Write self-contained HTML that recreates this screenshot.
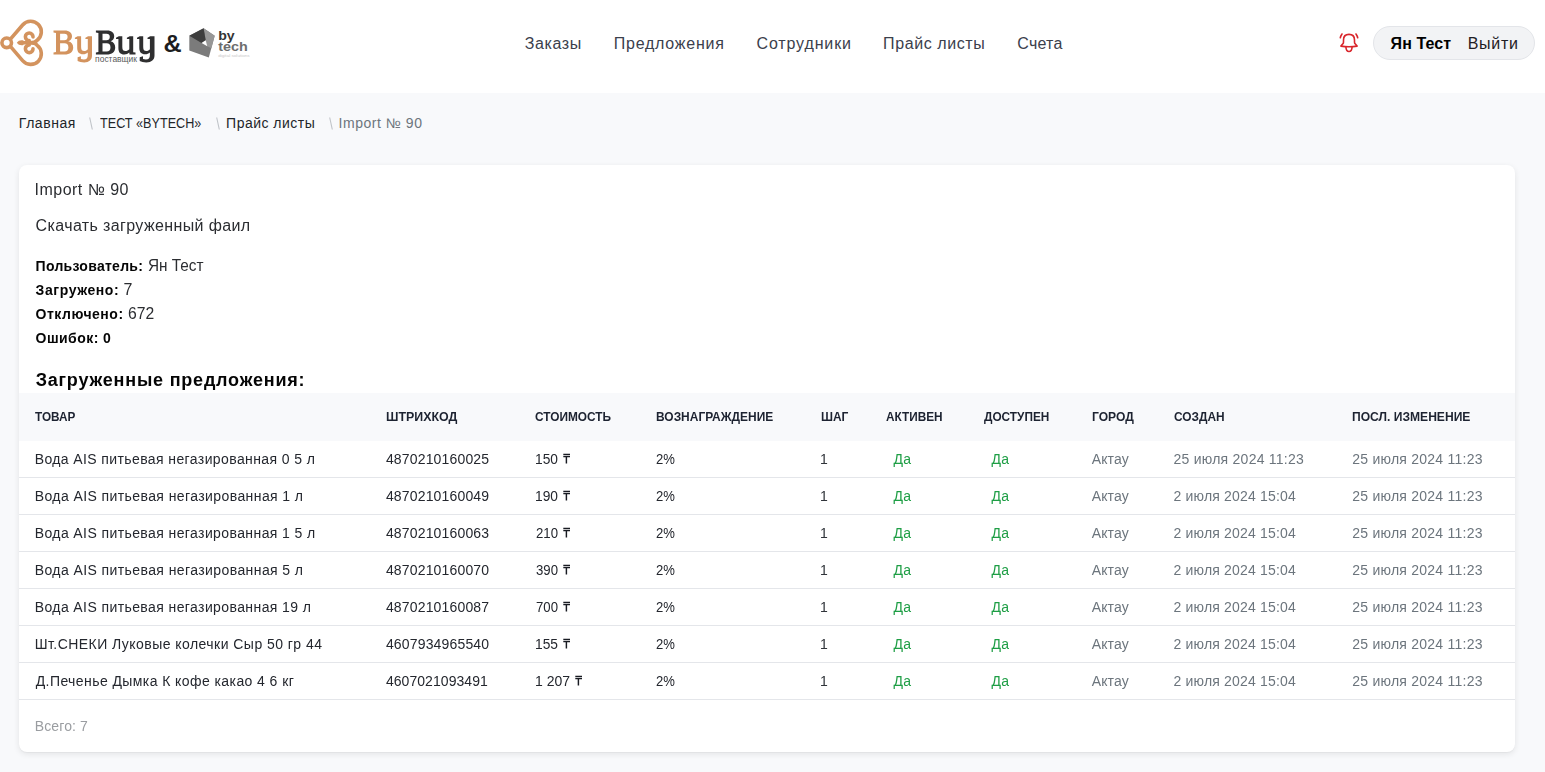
<!DOCTYPE html>
<html lang="ru"><head><meta charset="utf-8"><title>Import № 90</title>
<style>
html,body{margin:0;padding:0}
body{width:1545px;height:772px;overflow:hidden;position:relative;background:#f8f9fb;font-family:"Liberation Sans",sans-serif}
.t{position:absolute;white-space:nowrap}
.tg{display:inline-block;vertical-align:baseline}
header{position:absolute;left:0;top:0;width:1545px;height:93px;background:#fff}
.pill{position:absolute;left:1373px;top:26px;width:160px;height:32px;border:1px solid #e3e5e9;background:#f2f3f5;border-radius:17px}
.sep{position:absolute;top:117px;width:4px;height:13px}
.card{position:absolute;left:19px;top:165px;width:1496px;height:587px;background:#fff;border-radius:8px;box-shadow:0 2px 6px rgba(0,0,0,.09),0 1px 1px rgba(0,0,0,.03)}
.th{position:absolute;left:0;top:228px;width:1496px;height:48px;background:#f8f9fb}
.ct{position:absolute;left:0;top:0;width:1545px;height:772px;will-change:transform}
.rl{position:absolute;left:0;width:1496px;height:1px;background:#e4e6ea}
</style></head><body>
<header>
<svg style="position:absolute;left:0;top:0" width="260" height="93" viewBox="0 0 260 93">
<g fill="none" stroke="#d3935e" stroke-width="3.6" stroke-linecap="round" stroke-linejoin="round">
<circle cx="6.7" cy="42.8" r="4.8"/>
<path d="M10.4 39.2 L22.6 25.0 A10.6 10.6 0 1 1 37.2 40.2 Q35.2 42.8 30 42.8 L22 42.8"/>
<path d="M10.4 46.4 L22.6 60.6 A10.6 10.6 0 1 0 37.2 45.4 Q35.2 42.8 30 42.8"/>
<path d="M29.2 40.6 A3.8 3.8 0 1 1 33.0 36.9"/>
<path d="M29.2 45.0 A3.8 3.8 0 1 0 33.0 48.7"/>
</g>
<g fill="#d3935e">
<path d="M16.8 42.8 C18.3 40.6 20.6 39.9 23.5 40.5 L23.5 45.1 C20.6 45.7 18.3 45 16.8 42.8 Z"/>
<path fill-rule="evenodd" d="M53.5 30.5 H64.5 C69.5 30.5 72 33 72 36.3 C72 39 70.5 40.6 68.3 41.3 C71.5 42 73.2 44.3 73.2 47.5 C73.2 52 70 54.6 64.5 54.6 H53.5 V52.6 L56 52 V33.1 L53.5 32.5 Z M60.1 33.8 H64.3 C66.5 33.8 67.6 35 67.6 37 C67.6 39 66.4 40.3 64.2 40.3 H60.1 Z M60.1 43.3 H64.5 C67 43.3 68.4 44.8 68.4 47.4 C68.4 50 67 51.5 64.5 51.5 H60.1 Z"/>
<path d="M74.9 37.7 L77.6 36.3 H81.1 V47 C81.1 50 82.3 51 84.2 51 C85.6 51 87 50.2 87.8 49.2 V39 L85.4 38.9 V37.7 L88.1 36.3 H92 V55.5 C92 59.8 89.2 62.4 84.2 62.4 C81.5 62.4 79.2 61.8 77.6 61 V57.2 L80.9 56.2 V59 C81.8 59.3 82.8 59.5 83.8 59.5 C86.5 59.5 87.8 58 87.8 55 V52.5 C86.5 53.6 85 54.3 83 54.3 C79.2 54.3 77.2 52.2 77.2 47.8 V39 L74.9 38.9 Z"/>
</g>
<g fill="#2f2f30">
<path fill-rule="evenodd" d="M95.9 30.5 H107 C112 30.5 114.2 33 114.2 36.3 C114.2 39 112.8 40.6 110.6 41.3 C113.6 42 115.2 44.3 115.2 47.5 C115.2 52 112 54.6 106.6 54.6 H95.9 V52.6 L98.4 52 V33.1 L95.9 32.5 Z M102.5 33.8 H106.5 C108.7 33.8 109.8 35 109.8 37 C109.8 39 108.6 40.3 106.4 40.3 H102.5 Z M102.5 43.3 H106.6 C109.1 43.3 110.5 44.8 110.5 47.4 C110.5 50 109.1 51.5 106.6 51.5 H102.5 Z"/>
<path d="M116 37.7 L118.8 36.3 H122.3 V47 C122.3 50 123.5 51 125.4 51 C126.9 51 128.3 50.2 129.3 49.2 V39 L126.9 38.9 V37.7 L129.7 36.3 H133.2 V52.3 L135.5 52.6 V54.4 H129.5 L129.3 52.6 C128 53.8 126.4 54.5 124.3 54.5 C120.4 54.5 118.4 52.4 118.4 48 V39 L116 38.9 Z"/>
<path d="M137 37.7 L139.7 36.3 H143.2 V47 C143.2 50 144.4 51 146.3 51 C147.7 51 149.1 50.2 149.9 49.2 V39 L147.5 38.9 V37.7 L150.2 36.3 H154.5 V55.5 C154.5 59.8 151.5 62.4 146.3 62.4 C143.6 62.4 141.3 61.8 139.7 61 V57.2 L143 56.2 V59 C143.9 59.3 144.9 59.5 145.9 59.5 C148.6 59.5 149.9 58 149.9 55 V52.5 C148.6 53.6 147.1 54.3 145.1 54.3 C141.3 54.3 139.3 52.2 139.3 47.8 V39 L137 38.9 Z"/>
</g>
<text x="95.1" y="62" font-family="Liberation Sans" font-size="9" fill="#5c5c5c" textLength="41.9" lengthAdjust="spacingAndGlyphs">поставщик</text>
<text x="163.4" y="51.7" font-family="Liberation Sans" font-weight="700" font-size="24.5" fill="#1d1d1f" textLength="18.2" lengthAdjust="spacingAndGlyphs">&amp;</text>
<polygon points="189.3,35.7 203.6,28.2 214.7,35.7 208.8,57.4 189.3,50.6" fill="#7b7b7b"/>
<polygon points="203.6,28.2 214.7,35.7 211.4,48.3 207.3,46.2 205.7,40.3" fill="#979797"/>
<polygon points="189.3,35.7 203.6,28.2 205.7,40.3 201.6,43.1" fill="#3d3d3d"/>
<polygon points="201.6,43.1 205.7,40.3 207.3,46.2" fill="#ffffff"/>
<text x="218.2" y="40" font-family="Liberation Sans" font-weight="700" font-size="12.6" fill="#343434" textLength="16.5" lengthAdjust="spacingAndGlyphs">by</text>
<text x="218.2" y="50.9" font-family="Liberation Sans" font-weight="700" font-size="12" fill="#6d6d6d" textLength="29.5" lengthAdjust="spacingAndGlyphs">tech</text>
<text x="218.2" y="57.4" font-family="Liberation Sans" font-size="4" fill="#c9c9c9" textLength="31.5" lengthAdjust="spacingAndGlyphs">digital solutions</text>
</svg>

<svg style="position:absolute;left:1336px;top:30px" width="26" height="26" viewBox="1336 30 26 26" fill="none" stroke="#d9262c" stroke-width="1.6" stroke-linecap="round" stroke-linejoin="round">
<path d="M1343.3 43.2 C1343.6 42 1343.5 40.8 1343.5 39.9 C1343.5 36.4 1345.9 34.4 1349 34.4 C1352.1 34.4 1354.5 36.4 1354.5 39.9 C1354.5 40.8 1354.4 42 1354.7 43.2 L1357.1 46.1 C1351.8 46.9 1346.2 46.9 1340.9 46.1 Z"/>
<path d="M1345.9 46.7 C1346 49.5 1347.3 51.5 1349 51.5 C1350.7 51.5 1352 49.5 1352.1 46.7"/>
<path d="M1342 34 C1341.2 35.2 1340.6 36.5 1340.3 37.8"/>
<path d="M1356 34 C1356.8 35.2 1357.4 36.5 1357.7 37.8"/>
</svg>
<div class="pill"></div>
</header>
<svg class="sep" style="left:89px" viewBox="0 0 4 13"><path d="M0.7 0.5L3.3 12.5" stroke="#bfc3c8" stroke-width="1.1"/></svg>
<svg class="sep" style="left:216px" viewBox="0 0 4 13"><path d="M0.7 0.5L3.3 12.5" stroke="#bfc3c8" stroke-width="1.1"/></svg>
<svg class="sep" style="left:329px" viewBox="0 0 4 13"><path d="M0.7 0.5L3.3 12.5" stroke="#bfc3c8" stroke-width="1.1"/></svg>
<div class="card">
<div class="th"></div>
<div class="rl" style="top:312px"></div><div class="rl" style="top:349px"></div><div class="rl" style="top:386px"></div><div class="rl" style="top:423px"></div><div class="rl" style="top:460px"></div><div class="rl" style="top:497px"></div><div class="rl" style="top:534px"></div>
</div>
<span class="t" style="left:524.7px;top:36px;font:400 16px/16px 'Liberation Sans',sans-serif;color:#3b404c;letter-spacing:0.626px">Заказы</span>
<span class="t" style="left:613.7px;top:36px;font:400 16px/16px 'Liberation Sans',sans-serif;color:#3b404c;letter-spacing:0.771px">Предложения</span>
<span class="t" style="left:756.5px;top:36px;font:400 16px/16px 'Liberation Sans',sans-serif;color:#3b404c;letter-spacing:0.864px">Сотрудники</span>
<span class="t" style="left:883.1px;top:36px;font:400 16px/16px 'Liberation Sans',sans-serif;color:#3b404c;letter-spacing:0.592px">Прайс листы</span>
<span class="t" style="left:1017.3px;top:36px;font:400 16px/16px 'Liberation Sans',sans-serif;color:#3b404c;letter-spacing:0.218px">Счета</span>
<span class="t" style="left:1390.6px;top:36px;font:700 16px/16px 'Liberation Sans',sans-serif;color:#000;letter-spacing:0.071px">Ян Тест</span>
<span class="t" style="left:1467.7px;top:36px;font:400 16px/16px 'Liberation Sans',sans-serif;color:#1f2024;letter-spacing:0.716px">Выйти</span>
<span class="t" style="left:18.8px;top:116px;font:400 14px/14px 'Liberation Sans',sans-serif;color:#222529;letter-spacing:0.549px">Главная</span>
<span class="t" style="left:100.4px;top:116px;font:400 14px/14px 'Liberation Sans',sans-serif;color:#222529;transform-origin:0.00px 0;transform:scaleX(0.9018)">ТЕСТ «BYTECH»</span>
<span class="t" style="left:226.1px;top:116px;font:400 14px/14px 'Liberation Sans',sans-serif;color:#222529;letter-spacing:0.485px">Прайс листы</span>
<span class="t" style="left:338.6px;top:116px;font:400 14px/14px 'Liberation Sans',sans-serif;color:#6c757d;letter-spacing:0.534px">Import № 90</span>
<div class="ct">
<span class="t" style="left:34.6px;top:182px;font:400 16px/16px 'Liberation Sans',sans-serif;color:#2b2d31;letter-spacing:0.470px">Import № 90</span>
<span class="t" style="left:35.6px;top:218px;font:400 16px/16px 'Liberation Sans',sans-serif;color:#2b2d31;letter-spacing:0.375px">Скачать загруженный фаил</span>
<span class="t" style="left:35.6px;top:259px;font:700 14px/14px 'Liberation Sans',sans-serif;color:#050505;letter-spacing:0.277px">Пользователь:</span>
<span class="t" style="left:147.8px;top:258px;font:400 16px/16px 'Liberation Sans',sans-serif;color:#2b2d31;transform-origin:0.00px 0;transform:scaleX(0.9589)">Ян Тест</span>
<span class="t" style="left:35.6px;top:283px;font:700 14px/14px 'Liberation Sans',sans-serif;color:#050505;letter-spacing:0.573px">Загружено:</span>
<span class="t" style="left:123.4px;top:282px;font:400 16px/16px 'Liberation Sans',sans-serif;color:#2b2d31;letter-spacing:0.415px">7</span>
<span class="t" style="left:35.6px;top:307px;font:700 14px/14px 'Liberation Sans',sans-serif;color:#050505;letter-spacing:0.515px">Отключено:</span>
<span class="t" style="left:128.0px;top:306px;font:400 16px/16px 'Liberation Sans',sans-serif;color:#2b2d31;transform-origin:0.00px 0;transform:scaleX(0.9815)">672</span>
<span class="t" style="left:35.6px;top:331px;font:700 14px/14px 'Liberation Sans',sans-serif;color:#050505;letter-spacing:0.447px">Ошибок: 0</span>
<span class="t" style="left:35.7px;top:371px;font:700 18px/18px 'Liberation Sans',sans-serif;color:#050505;letter-spacing:0.793px">Загруженные предложения:</span>
<span class="t" style="left:35.1px;top:411px;font:700 12.5px/12.5px 'Liberation Sans',sans-serif;color:#1d2331;transform-origin:0.00px 0;transform:scaleX(0.9416)">ТОВАР</span>
<span class="t" style="left:385.9px;top:411px;font:700 12.5px/12.5px 'Liberation Sans',sans-serif;color:#1d2331;transform-origin:0.00px 0;transform:scaleX(0.9925)">ШТРИХКОД</span>
<span class="t" style="left:535.4px;top:411px;font:700 12.5px/12.5px 'Liberation Sans',sans-serif;color:#1d2331;transform-origin:0.00px 0;transform:scaleX(0.9485)">СТОИМОСТЬ</span>
<span class="t" style="left:655.5px;top:411px;font:700 12.5px/12.5px 'Liberation Sans',sans-serif;color:#1d2331;transform-origin:0.00px 0;transform:scaleX(0.9564)">ВОЗНАГРАЖДЕНИЕ</span>
<span class="t" style="left:820.6px;top:411px;font:700 12.5px/12.5px 'Liberation Sans',sans-serif;color:#1d2331;transform-origin:0.00px 0;transform:scaleX(0.9549)">ШАГ</span>
<span class="t" style="left:885.9px;top:411px;font:700 12.5px/12.5px 'Liberation Sans',sans-serif;color:#1d2331;transform-origin:0.00px 0;transform:scaleX(0.9441)">АКТИВЕН</span>
<span class="t" style="left:983.9px;top:411px;font:700 12.5px/12.5px 'Liberation Sans',sans-serif;color:#1d2331;transform-origin:0.00px 0;transform:scaleX(0.9453)">ДОСТУПЕН</span>
<span class="t" style="left:1092.1px;top:411px;font:700 12.5px/12.5px 'Liberation Sans',sans-serif;color:#1d2331;transform-origin:0.00px 0;transform:scaleX(0.9660)">ГОРОД</span>
<span class="t" style="left:1173.5px;top:411px;font:700 12.5px/12.5px 'Liberation Sans',sans-serif;color:#1d2331;transform-origin:0.00px 0;transform:scaleX(0.9511)">СОЗДАН</span>
<span class="t" style="left:1352.2px;top:411px;font:700 12.5px/12.5px 'Liberation Sans',sans-serif;color:#1d2331;transform-origin:0.00px 0;transform:scaleX(0.9674)">ПОСЛ. ИЗМЕНЕНИЕ</span>
<span class="t" style="left:34.7px;top:452px;font:400 14px/14px 'Liberation Sans',sans-serif;color:#24272e;letter-spacing:0.393px">Вода AIS питьевая негазированная 0 5 л</span>
<span class="t" style="left:385.9px;top:452px;font:400 14px/14px 'Liberation Sans',sans-serif;color:#24272e;letter-spacing:0.164px">4870210160025</span>
<span class="t" style="left:535.0px;top:452px;font:400 14px/14px 'Liberation Sans',sans-serif;color:#24272e;transform-origin:1.00px 0;transform:scaleX(0.9835)">150</span>
<span class="t" style="left:655.5px;top:452px;font:400 14px/14px 'Liberation Sans',sans-serif;color:#24272e;transform-origin:0.00px 0;transform:scaleX(0.9350)">2%</span>
<span class="t" style="left:820.0px;top:452px;font:400 14px/14px 'Liberation Sans',sans-serif;color:#30343a;letter-spacing:0.415px">1</span>
<span class="t" style="left:893.6px;top:452px;font:400 14px/14px 'Liberation Sans',sans-serif;color:#1e9e45;letter-spacing:0.119px">Да</span>
<span class="t" style="left:991.6px;top:452px;font:400 14px/14px 'Liberation Sans',sans-serif;color:#1e9e45;letter-spacing:0.119px">Да</span>
<span class="t" style="left:1091.7px;top:452px;font:400 14px/14px 'Liberation Sans',sans-serif;color:#6c757d;letter-spacing:0.124px">Актау</span>
<span class="t" style="left:1173.5px;top:452px;font:400 14px/14px 'Liberation Sans',sans-serif;color:#6c757d;letter-spacing:0.244px">25 июля 2024 11:23</span>
<span class="t" style="left:1352.2px;top:452px;font:400 14px/14px 'Liberation Sans',sans-serif;color:#6c757d;letter-spacing:0.244px">25 июля 2024 11:23</span>
<span class="t" style="left:34.7px;top:489px;font:400 14px/14px 'Liberation Sans',sans-serif;color:#24272e;letter-spacing:0.412px">Вода AIS питьевая негазированная 1 л</span>
<span class="t" style="left:385.9px;top:489px;font:400 14px/14px 'Liberation Sans',sans-serif;color:#24272e;letter-spacing:0.164px">4870210160049</span>
<span class="t" style="left:535.0px;top:489px;font:400 14px/14px 'Liberation Sans',sans-serif;color:#24272e;transform-origin:1.00px 0;transform:scaleX(0.9835)">190</span>
<span class="t" style="left:655.5px;top:489px;font:400 14px/14px 'Liberation Sans',sans-serif;color:#24272e;transform-origin:0.00px 0;transform:scaleX(0.9350)">2%</span>
<span class="t" style="left:820.0px;top:489px;font:400 14px/14px 'Liberation Sans',sans-serif;color:#30343a;letter-spacing:0.415px">1</span>
<span class="t" style="left:893.6px;top:489px;font:400 14px/14px 'Liberation Sans',sans-serif;color:#1e9e45;letter-spacing:0.119px">Да</span>
<span class="t" style="left:991.6px;top:489px;font:400 14px/14px 'Liberation Sans',sans-serif;color:#1e9e45;letter-spacing:0.119px">Да</span>
<span class="t" style="left:1091.7px;top:489px;font:400 14px/14px 'Liberation Sans',sans-serif;color:#6c757d;letter-spacing:0.124px">Актау</span>
<span class="t" style="left:1173.5px;top:489px;font:400 14px/14px 'Liberation Sans',sans-serif;color:#6c757d;letter-spacing:0.181px">2 июля 2024 15:04</span>
<span class="t" style="left:1352.2px;top:489px;font:400 14px/14px 'Liberation Sans',sans-serif;color:#6c757d;letter-spacing:0.244px">25 июля 2024 11:23</span>
<span class="t" style="left:34.7px;top:526px;font:400 14px/14px 'Liberation Sans',sans-serif;color:#24272e;letter-spacing:0.404px">Вода AIS питьевая негазированная 1 5 л</span>
<span class="t" style="left:385.9px;top:526px;font:400 14px/14px 'Liberation Sans',sans-serif;color:#24272e;letter-spacing:0.164px">4870210160063</span>
<span class="t" style="left:536.0px;top:526px;font:400 14px/14px 'Liberation Sans',sans-serif;color:#24272e;transform-origin:0.00px 0;transform:scaleX(0.9418)">210</span>
<span class="t" style="left:655.5px;top:526px;font:400 14px/14px 'Liberation Sans',sans-serif;color:#24272e;transform-origin:0.00px 0;transform:scaleX(0.9350)">2%</span>
<span class="t" style="left:820.0px;top:526px;font:400 14px/14px 'Liberation Sans',sans-serif;color:#30343a;letter-spacing:0.415px">1</span>
<span class="t" style="left:893.6px;top:526px;font:400 14px/14px 'Liberation Sans',sans-serif;color:#1e9e45;letter-spacing:0.119px">Да</span>
<span class="t" style="left:991.6px;top:526px;font:400 14px/14px 'Liberation Sans',sans-serif;color:#1e9e45;letter-spacing:0.119px">Да</span>
<span class="t" style="left:1091.7px;top:526px;font:400 14px/14px 'Liberation Sans',sans-serif;color:#6c757d;letter-spacing:0.124px">Актау</span>
<span class="t" style="left:1173.5px;top:526px;font:400 14px/14px 'Liberation Sans',sans-serif;color:#6c757d;letter-spacing:0.181px">2 июля 2024 15:04</span>
<span class="t" style="left:1352.2px;top:526px;font:400 14px/14px 'Liberation Sans',sans-serif;color:#6c757d;letter-spacing:0.244px">25 июля 2024 11:23</span>
<span class="t" style="left:34.7px;top:563px;font:400 14px/14px 'Liberation Sans',sans-serif;color:#24272e;letter-spacing:0.412px">Вода AIS питьевая негазированная 5 л</span>
<span class="t" style="left:385.9px;top:563px;font:400 14px/14px 'Liberation Sans',sans-serif;color:#24272e;letter-spacing:0.164px">4870210160070</span>
<span class="t" style="left:536.0px;top:563px;font:400 14px/14px 'Liberation Sans',sans-serif;color:#24272e;transform-origin:0.00px 0;transform:scaleX(0.9418)">390</span>
<span class="t" style="left:655.5px;top:563px;font:400 14px/14px 'Liberation Sans',sans-serif;color:#24272e;transform-origin:0.00px 0;transform:scaleX(0.9350)">2%</span>
<span class="t" style="left:820.0px;top:563px;font:400 14px/14px 'Liberation Sans',sans-serif;color:#30343a;letter-spacing:0.415px">1</span>
<span class="t" style="left:893.6px;top:563px;font:400 14px/14px 'Liberation Sans',sans-serif;color:#1e9e45;letter-spacing:0.119px">Да</span>
<span class="t" style="left:991.6px;top:563px;font:400 14px/14px 'Liberation Sans',sans-serif;color:#1e9e45;letter-spacing:0.119px">Да</span>
<span class="t" style="left:1091.7px;top:563px;font:400 14px/14px 'Liberation Sans',sans-serif;color:#6c757d;letter-spacing:0.124px">Актау</span>
<span class="t" style="left:1173.5px;top:563px;font:400 14px/14px 'Liberation Sans',sans-serif;color:#6c757d;letter-spacing:0.181px">2 июля 2024 15:04</span>
<span class="t" style="left:1352.2px;top:563px;font:400 14px/14px 'Liberation Sans',sans-serif;color:#6c757d;letter-spacing:0.244px">25 июля 2024 11:23</span>
<span class="t" style="left:34.7px;top:600px;font:400 14px/14px 'Liberation Sans',sans-serif;color:#24272e;letter-spacing:0.404px">Вода AIS питьевая негазированная 19 л</span>
<span class="t" style="left:385.9px;top:600px;font:400 14px/14px 'Liberation Sans',sans-serif;color:#24272e;letter-spacing:0.164px">4870210160087</span>
<span class="t" style="left:536.0px;top:600px;font:400 14px/14px 'Liberation Sans',sans-serif;color:#24272e;transform-origin:0.00px 0;transform:scaleX(0.9418)">700</span>
<span class="t" style="left:655.5px;top:600px;font:400 14px/14px 'Liberation Sans',sans-serif;color:#24272e;transform-origin:0.00px 0;transform:scaleX(0.9350)">2%</span>
<span class="t" style="left:820.0px;top:600px;font:400 14px/14px 'Liberation Sans',sans-serif;color:#30343a;letter-spacing:0.415px">1</span>
<span class="t" style="left:893.6px;top:600px;font:400 14px/14px 'Liberation Sans',sans-serif;color:#1e9e45;letter-spacing:0.119px">Да</span>
<span class="t" style="left:991.6px;top:600px;font:400 14px/14px 'Liberation Sans',sans-serif;color:#1e9e45;letter-spacing:0.119px">Да</span>
<span class="t" style="left:1091.7px;top:600px;font:400 14px/14px 'Liberation Sans',sans-serif;color:#6c757d;letter-spacing:0.124px">Актау</span>
<span class="t" style="left:1173.5px;top:600px;font:400 14px/14px 'Liberation Sans',sans-serif;color:#6c757d;letter-spacing:0.181px">2 июля 2024 15:04</span>
<span class="t" style="left:1352.2px;top:600px;font:400 14px/14px 'Liberation Sans',sans-serif;color:#6c757d;letter-spacing:0.244px">25 июля 2024 11:23</span>
<span class="t" style="left:34.7px;top:637px;font:400 14px/14px 'Liberation Sans',sans-serif;color:#24272e;letter-spacing:0.456px">Шт.СНЕКИ Луковые колечки Сыр 50 гр 44</span>
<span class="t" style="left:385.9px;top:637px;font:400 14px/14px 'Liberation Sans',sans-serif;color:#24272e;letter-spacing:0.164px">4607934965540</span>
<span class="t" style="left:535.0px;top:637px;font:400 14px/14px 'Liberation Sans',sans-serif;color:#24272e;transform-origin:1.00px 0;transform:scaleX(0.9835)">155</span>
<span class="t" style="left:655.5px;top:637px;font:400 14px/14px 'Liberation Sans',sans-serif;color:#24272e;transform-origin:0.00px 0;transform:scaleX(0.9350)">2%</span>
<span class="t" style="left:820.0px;top:637px;font:400 14px/14px 'Liberation Sans',sans-serif;color:#30343a;letter-spacing:0.415px">1</span>
<span class="t" style="left:893.6px;top:637px;font:400 14px/14px 'Liberation Sans',sans-serif;color:#1e9e45;letter-spacing:0.119px">Да</span>
<span class="t" style="left:991.6px;top:637px;font:400 14px/14px 'Liberation Sans',sans-serif;color:#1e9e45;letter-spacing:0.119px">Да</span>
<span class="t" style="left:1091.7px;top:637px;font:400 14px/14px 'Liberation Sans',sans-serif;color:#6c757d;letter-spacing:0.124px">Актау</span>
<span class="t" style="left:1173.5px;top:637px;font:400 14px/14px 'Liberation Sans',sans-serif;color:#6c757d;letter-spacing:0.181px">2 июля 2024 15:04</span>
<span class="t" style="left:1352.2px;top:637px;font:400 14px/14px 'Liberation Sans',sans-serif;color:#6c757d;letter-spacing:0.244px">25 июля 2024 11:23</span>
<span class="t" style="left:35.7px;top:674px;font:400 14px/14px 'Liberation Sans',sans-serif;color:#24272e;letter-spacing:0.420px">Д.Печенье Дымка К кофе какао 4 6 кг</span>
<span class="t" style="left:385.9px;top:674px;font:400 14px/14px 'Liberation Sans',sans-serif;color:#24272e;letter-spacing:0.056px">4607021093491</span>
<span class="t" style="left:535.0px;top:674px;font:400 14px/14px 'Liberation Sans',sans-serif;color:#24272e;transform-origin:1.00px 0;transform:scaleX(0.9986)">1 207</span>
<span class="t" style="left:655.5px;top:674px;font:400 14px/14px 'Liberation Sans',sans-serif;color:#24272e;transform-origin:0.00px 0;transform:scaleX(0.9350)">2%</span>
<span class="t" style="left:820.0px;top:674px;font:400 14px/14px 'Liberation Sans',sans-serif;color:#30343a;letter-spacing:0.415px">1</span>
<span class="t" style="left:893.6px;top:674px;font:400 14px/14px 'Liberation Sans',sans-serif;color:#1e9e45;letter-spacing:0.119px">Да</span>
<span class="t" style="left:991.6px;top:674px;font:400 14px/14px 'Liberation Sans',sans-serif;color:#1e9e45;letter-spacing:0.119px">Да</span>
<span class="t" style="left:1091.7px;top:674px;font:400 14px/14px 'Liberation Sans',sans-serif;color:#6c757d;letter-spacing:0.124px">Актау</span>
<span class="t" style="left:1173.5px;top:674px;font:400 14px/14px 'Liberation Sans',sans-serif;color:#6c757d;letter-spacing:0.181px">2 июля 2024 15:04</span>
<span class="t" style="left:1352.2px;top:674px;font:400 14px/14px 'Liberation Sans',sans-serif;color:#6c757d;letter-spacing:0.244px">25 июля 2024 11:23</span>
<span class="t" style="left:34.7px;top:719px;font:400 14px/14px 'Liberation Sans',sans-serif;color:#9a9da1;letter-spacing:0.130px">Всего: 7</span>
<svg class="t" style="left:563.2px;top:453px" width="8" height="11" viewBox="0 0 8 11"><path d="M0.3 1.4H7M0.3 3.6H7M3.4 3.6V10.6" stroke="#181b22" stroke-width="1.45" fill="none"/></svg>
<svg class="t" style="left:563.2px;top:490px" width="8" height="11" viewBox="0 0 8 11"><path d="M0.3 1.4H7M0.3 3.6H7M3.4 3.6V10.6" stroke="#181b22" stroke-width="1.45" fill="none"/></svg>
<svg class="t" style="left:563.2px;top:527px" width="8" height="11" viewBox="0 0 8 11"><path d="M0.3 1.4H7M0.3 3.6H7M3.4 3.6V10.6" stroke="#181b22" stroke-width="1.45" fill="none"/></svg>
<svg class="t" style="left:563.2px;top:564px" width="8" height="11" viewBox="0 0 8 11"><path d="M0.3 1.4H7M0.3 3.6H7M3.4 3.6V10.6" stroke="#181b22" stroke-width="1.45" fill="none"/></svg>
<svg class="t" style="left:563.2px;top:601px" width="8" height="11" viewBox="0 0 8 11"><path d="M0.3 1.4H7M0.3 3.6H7M3.4 3.6V10.6" stroke="#181b22" stroke-width="1.45" fill="none"/></svg>
<svg class="t" style="left:563.2px;top:638px" width="8" height="11" viewBox="0 0 8 11"><path d="M0.3 1.4H7M0.3 3.6H7M3.4 3.6V10.6" stroke="#181b22" stroke-width="1.45" fill="none"/></svg>
<svg class="t" style="left:575.0px;top:675px" width="8" height="11" viewBox="0 0 8 11"><path d="M0.3 1.4H7M0.3 3.6H7M3.4 3.6V10.6" stroke="#181b22" stroke-width="1.45" fill="none"/></svg>
</div>
</body></html>
